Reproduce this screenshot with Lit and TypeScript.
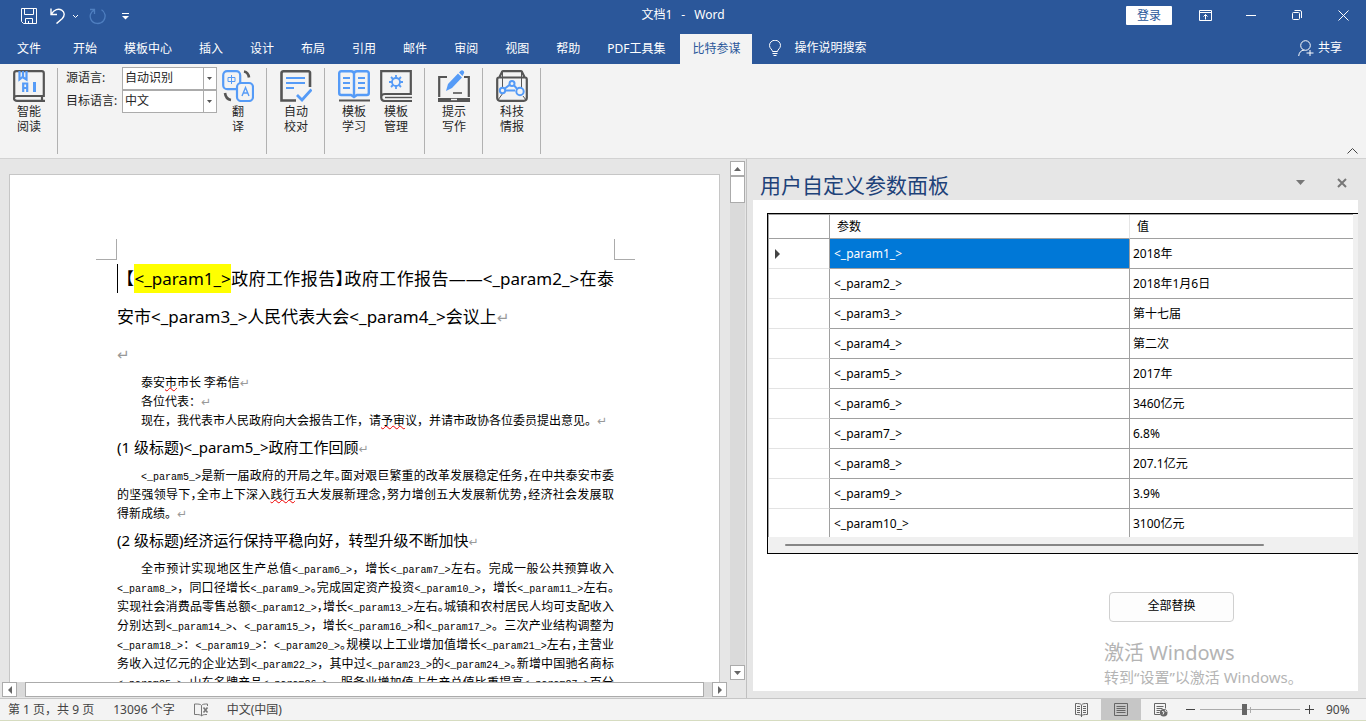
import { LitElement, html, svg, css } from "lit";
import { customElement, state } from "lit/decorators.js";
import { classMap } from "lit/directives/class-map.js";

const tabs = ["文件", "开始", "模板中心", "插入", "设计", "布局", "引用", "邮件", "审阅", "视图", "帮助", "PDF工具集", "比特参谋"];

const values = ["2018年", "2018年1月6日", "第十七届", "第二次", "2017年", "3460亿元", "6.8%", "207.1亿元", "3.9%", "3100亿元"];

/* "|" after a punctuation mark sets it half width; [..] is a spelling mark. */
const overview = [
  "<_param5_>是新一届政府的开局之年。|面对艰巨繁重的改革发展稳定任务,|在中共泰安市委",
  "的坚强领导下,|全市上下深入[践行]五大发展新理念,|努力增创五大发展新优势,|经济社会发展取",
];
const economy = [
  "全市预计实现地区生产总值<_param6_>,增长<_param7_>左右。完成一般公共预算收入",
  "<_param8_>,同口径增长<_param9_>。|完成固定资产投资<_param10_>,增长<_param11_>左右。|",
  "实现社会消费品零售总额<_param12_>,|增长<_param13_>左右。|城镇和农村居民人均可支配收入",
  "分别达到<_param14_>、<_param15_>,增长<_param16_>和<_param17_>。三次产业结构调整为",
  "<_param18_>:<_param19_>:<_param20_>。|规模以上工业增加值增长<_param21_>左右,|主营业",
  "务收入过亿元的企业达到<_param22_>,其中过<_param23_>的<_param24_>。|新增中国驰名商标",
  "<_param25_>、|山东名牌产品<_param26_>。服务业增加值占生产总值比重提高<_param27_>百分",
];

const fullWidth = (s: string) => s.replace(/,/g, "\uFF0C").replace(/:/g, "\uFF1A");

function rich(text: string) {
  return text
    .split(/(<_param\d+_>|.\||\[[^\]]+\])/)
    .filter((p) => p !== "")
    .map((p) => {
      if (p.startsWith("<_")) return html`<span class="token">${p}</span>`;
      if (p.endsWith("|")) return html`<span class="half">${fullWidth(p[0])}</span>`;
      if (p.startsWith("[")) return html`<span class="spell">${p.slice(1, -1)}</span>`;
      return fullWidth(p);
    });
}

const icon = (w: number, h: number, body: unknown) =>
  html`<svg width=${w} height=${h} viewBox="0 0 ${w} ${h}" fill="none" stroke="currentColor" aria-hidden="true">${body}</svg>`;

const G = "#555555";
const B = "#559bf7";

const icons = {
  save: icon(16, 16, svg`<path d="M.5 .5h15v15h-13l-2-2zM3.5 .5v6h9v-6M4.5 15.5v-5h7v5M7.500 13v2"/>`),
  undo: icon(16, 16, svg`<path stroke-width="1.400" d="M1 .5v6h6M1.500 6C4 1.500 8.500 .2 11.700 2.200c3.200 2 3.200 5.600 .6 8.200L6.500 15.600"/>`),
  caret: icon(7, 5, svg`<path d="M1 1l2.500 2.500L6 1"/>`),
  redo: icon(17, 17, svg`<path stroke-width="1.300" d="M1 1.500h4.500v4.500M5.200 2C1.500 4 .2 8 2 11.600c2.500 4.800 9.400 5.200 12.600 1C17.200 9 16.400 4 12.500 1.800"/>`),
  more: icon(7, 7, svg`<path d="M0 .5h7"/><path fill="currentColor" stroke="none" d="M0 3h7L3.500 6.500z"/>`),
  display: icon(13, 11, svg`<path d="M.5 .5h12v10H.5zM.5 2.500h12M6.500 9.500V4.500M4.500 6.500l2-2 2 2"/>`),
  min: icon(10, 10, svg`<path d="M0 5.500h10"/>`),
  restore: icon(10, 10, svg`<rect x=".5" y="2.500" width="7" height="7" rx="1"/><path d="M2.500 .5H8a1.500 1.500 0 0 1 1.500 1.500v6"/>`),
  close: icon(11, 11, svg`<path d="M.5 .5l10 10M10.500 .5l-10 10"/>`),
  bulb: icon(12, 17, svg`<path d="M3.500 11.500c0-2-3-3-3-6a5.200 5 0 0 1 11 0c0 3-3 4-3 6zM3.500 13.500h5M4.500 15.500h3"/>`),
  share: icon(16, 17, svg`<circle cx="7.500" cy="5.500" r="4.800"/><path d="M.7 16c.3-3.500 2.300-5.700 5.500-6M12 10v6M8.500 13h7"/>`),
  read: icon(32, 32, svg`<path stroke=${G} stroke-width="2.200" d="M1.200 28V3a2 2 0 0 1 2-1.800h25.600a2 2 0 0 1 2 1.800v23H4a3 2.400 0 0 0 0 4.800h28M29 26v5"/><path stroke=${B} stroke-width="2.200" d="M6.500 1v8.500l3-2.500L13.500 9.500V1M10 1v6M10.200 22v-8.500h4V22M10 18h4"/><path stroke=${B} stroke-width="3" d="M21.500 12v10"/>`),
  translate: icon(32, 32, svg`<g stroke=${B} stroke-width="2.200"><rect x="1.200" y="1.200" width="17" height="18" rx="4"/><rect x="15" y="13" width="16" height="18" rx="4" fill="#f3f3f3"/></g><path stroke=${B} d="M6 7.500h7v4H6zM9.500 5v9"/><path stroke=${B} stroke-width="1.400" d="M20 26l3.500-8.500L27 26M21.500 23h4"/><path stroke=${G} stroke-width="2.600" d="M22 1.500c3 .5 4.500 2.500 5 6M3 23c.5 4 2.500 6.500 6 7"/>`),
  proof: icon(32, 32, svg`<path stroke=${G} stroke-width="2.600" d="M30 17V3a1.500 1.500 0 0 0-1.500-1.700H3.500A2 2 0 0 0 1.500 3v27.500H16"/><path stroke=${B} stroke-width="2.200" d="M6 8h19M6 13h19M6 18h8"/><path stroke=${B} stroke-width="2.800" d="M17 25l5 5 9.500-10.500"/>`),
  learn: icon(32, 32, svg`<path stroke=${B} stroke-width="2.400" d="M16 4c0-2-1-2.800-3-2.800H3.200a2 2 0 0 0-2 2V23a2 2 0 0 0 2 2H13l3 2 3-2h9.800a2 2 0 0 0 2-2V3.200a2 2 0 0 0-2-2H19c-2 0-3 .8-3 2.800zV27"/><path stroke=${B} stroke-width="2" d="M5 8h7M5 13h7M5 18h7M20 8h7M20 13h7M20 18h7"/><path stroke=${G} stroke-width="2" d="M1 30.500h31"/>`),
  manage: icon(32, 32, svg`<path stroke=${G} stroke-width="2.200" d="M1.200 28V1.200h29.600V24H5c-5 0-5 7 0 7h27"/><path stroke=${G} stroke-width="1.400" d="M5 27.500h27"/><g stroke=${B}><circle cx="16" cy="12" r="4" stroke-width="1.800"/><path stroke-width="1.800" d="M16 5v3M16 16v3M9 12h3M20 12h3M11 7l2 2M19 15l2 2M21 7l-2 2M13 15l-2 2"/></g>`),
  write: icon(32, 32, svg`<path stroke=${G} stroke-width="2.200" d="M9 7H1.200v20M26 7h4.800v20"/><path fill=${G} stroke="none" d="M0 28h32v4H0z"/><path stroke="#f3f3f3" stroke-width="1.400" d="M13 29.500h6"/><path stroke=${G} stroke-width="1.600" d="M15 23h9"/><path fill=${B} stroke="none" d="M8 21l2-7L20 3.500l4 4L14 18zM21 2.500l1.500-1.500c2-2 5 .8 3 3L24.500 6z"/>`),
  intel: icon(32, 32, svg`<path stroke=${G} stroke-width="2.200" d="M3 8l3-6a1 1 0 0 1 1-.8h18a1 1 0 0 1 1 .8L29 8M1.200 9.500C1.200 8 2 7.500 3 7.500h26c1 0 1.800 .5 1.800 2V28a3 3 0 0 1-3 2.800H4a3 3 0 0 1-2.800-2.800z"/><path stroke=${G} d="M6.500 2v21M25.500 2v16M2 30l5-7M30 30l-3-4"/><g stroke=${B} stroke-width="2" fill="#f3f3f3"><path fill="none" d="M7 20l9-7 7 8M10 20.500h9"/><circle cx="16" cy="13.500" r="2.500"/><circle cx="6.500" cy="20.500" r="2.700"/><circle cx="24" cy="21.500" r="3.700"/></g>`),
  up: icon(11, 6, svg`<path d="M.5 5.500l5-5 5 5"/>`),
  triUp: icon(7, 4, svg`<path fill="currentColor" stroke="none" d="M0 4h7L3.500 0z"/>`),
  triDown: icon(7, 4, svg`<path fill="currentColor" stroke="none" d="M0 0h7L3.500 4z"/>`),
  triLeft: icon(4, 8, svg`<path fill="currentColor" stroke="none" d="M4 0v8L0 4z"/>`),
  triRight: icon(4, 8, svg`<path fill="currentColor" stroke="none" d="M0 0v8l4-4z"/>`),
  drop: icon(5, 3, svg`<path fill="currentColor" stroke="none" d="M0 0h5L2.500 3z"/>`),
  paneMenu: icon(9, 5, svg`<path fill="currentColor" stroke="none" d="M0 0h9L4.500 5z"/>`),
  paneClose: icon(10, 10, svg`<path stroke-width="2" d="M1 1l8 8M9 1L1 9"/>`),
  rowMark: icon(5, 10, svg`<path fill="currentColor" stroke="none" d="M0 0v10l5-5z"/>`),
  spelling: icon(15, 14, svg`<path d="M7.500 2.500c-1-1.500-3-1.500-7-1.500v10.500c4 0 6 0 7 1.500zM7.500 2.500c1-1.500 3-1.500 6-1.500v2M7.500 13c.5-1 2-1.500 5.500-1.500"/><path stroke-width="1.600" d="M9.500 4.500l4 5M13.500 4.500l-4 5"/>`),
  viewRead: icon(13, 14, svg`<path d="M6.500 2c-1-1.500-3-1.500-6-1.500v11c3 0 5 0 6 1.500 1-1.500 3-1.500 6-1.500V.5c-3 0-5 0-6 1.500zV14M2 3.500h3M2 5.500h3M2 7.500h3M2 9.500h3M8 3.500h3M8 5.500h3M8 7.500h3M8 9.500h3"/>`),
  viewPrint: icon(14, 13, svg`<path d="M.5 .5h13v12H.5zM2.500 3.500h9M2.500 5.500h9M2.500 7.500h9M2.500 9.500h9"/>`),
  viewWeb: icon(14, 14, svg`<path d="M6 11.500H.5V.5h11v5M2.500 3.500h7M2.500 5.500h6M2.500 7.500h4M2.500 9.500h3"/><circle cx="9.700" cy="9.700" r="3.800" fill="currentColor" stroke="none"/><path stroke="#f3f3f3" d="M8 8.500l2 .5-1 2.500M11 7l1.500 2"/>`),
  minus: icon(9, 9, svg`<path d="M0 4.500h9"/>`),
  plus: icon(9, 9, svg`<path d="M0 4.500h9M4.500 0v9"/>`),
};

@customElement("app-root")
export class AppRoot extends LitElement {
  @state() private activeTab = "比特参谋";
  @state() private selected = 0;

  static styles = css`
    :host {
      display: flex;
      flex-direction: column;
      height: 100vh;
      overflow: hidden;
      font: 12px/16px "Noto Sans", "Noto Sans CJK SC", sans-serif;
      color: #262626;
      background: #e6e6e6;
    }
    * { box-sizing: border-box; }
    svg { display: block; flex: none; }
    p, h1, h2, h3 { margin: 0; font-weight: 400; }
    button, select {
      font: inherit;
      color: inherit;
      background: none;
      border: 0;
      padding: 0;
      margin: 0;
      border-radius: 0;
    }
    button { display: flex; align-items: center; justify-content: center; white-space: nowrap; }

    .titlebar {
      display: grid;
      grid-template-columns: 1fr auto 1fr;
      flex: none;
      height: 32px;
      background: #2b579a;
      color: #fff;
    }
    .quick { display: flex; align-items: center; padding-left: 21px; }
    .quick .undo { margin-left: 13px; }
    .quick .history { margin-left: 6px; }
    .quick .redo { margin-left: 10px; color: #4f7fc0; }
    .quick .more { margin-left: 16px; }
    .doc-name { display: flex; gap: 9px; line-height: 30px; }
    .window { display: flex; justify-content: flex-end; }
    .window button { width: 46px; height: 30px; }
    .window .login {
      height: 19px;
      margin: 6px 10px 0 0;
      background: #fff;
      color: #2b579a;
      border-radius: 1px;
    }

    .tabs { display: flex; flex: none; height: 32px; padding: 0 24px 0 5px; background: #2b579a; color: #fff; }
    .tab { padding: 0 12px; margin-right: 3px; height: 30px; margin-top: 2px; }
    .tab:first-child { margin-right: 8px; }
    .tab.active { background: #f3f3f3; color: #2b579a; margin-right: 17px; }
    .tell { gap: 13px; height: 32px; }
    .share { gap: 4px; height: 32px; margin-left: auto; }

    .ribbon { display: flex; flex: none; height: 95px; padding-top: 4px; background: #f3f3f3; border-bottom: 1px solid #d2d2d2; }
    .group { display: flex; gap: 10px; height: 86px; padding: 2px 12px 0 13px; border-right: 1px solid #b1b1b1; }
    .group.languages { gap: 5px; padding: 0 12px 0 8px; }
    .command { flex-direction: column; justify-content: flex-start; width: 32px; height: 64px; gap: 2px; line-height: 15px; white-space: normal; }
    .command span { width: 24px; }
    .command .single { width: 12px; }
    .languages .command { margin-top: 2px; }
    .fields { display: grid; grid-template-columns: 51px 95px; column-gap: 5px; grid-auto-rows: 23px; margin-top: -1px; white-space: nowrap; }
    .fields label { line-height: 22px; }
    .combo { position: relative; }
    .combo select {
      appearance: none;
      width: 100%;
      height: 23px;
      padding: 0 16px 2px 2px;
      background: #fff;
      border: 1px solid #ababab;
      line-height: 20px;
    }
    .combo svg { position: absolute; right: 5px; top: 10px; color: #555; pointer-events: none; }
    .combo::after { content: ""; position: absolute; right: 13px; top: 1px; bottom: 1px; border-left: 1px solid #ababab; pointer-events: none; }
    .collapse { margin: auto 8px 4px auto; color: #444; }

    .body { display: flex; flex: 1; min-height: 0; }
    .document { display: grid; flex: 1; min-width: 0; grid-template: minmax(0, 1fr) 16px / minmax(0, 1fr) 16px; border-right: 1px solid #c0c0c0; }
    .viewport { overflow: hidden; padding: 15px 10px 0 9px; }
    .page { height: 1000px; padding: 64px 105px 0 107px; background: #fff; border: 1px solid #c6c6c6; color: #000; }
    .marks { display: flex; justify-content: space-between; height: 21px; margin: 0 -21px; }
    .marks span { width: 21px; border: 0 solid #ababab; border-bottom-width: 1px; }
    .marks .left { border-right-width: 1px; }
    .marks .right { border-left-width: 1px; }
    .line { white-space: nowrap; text-align: justify; text-align-last: justify; }
    .headline { position: relative; font-size: 17px; line-height: 38px; }
    .headline mark { padding: 3px 0; background: #ff0; color: #000; }
    .cursor { position: absolute; left: 0; top: 4px; width: 1px; height: 29px; background: #000; }
    .blank { line-height: 36px; font-size: 17px; }
    .heading { font-size: 15px; line-height: 36px; white-space: nowrap; }
    .text { font-family: "Noto Sans CJK SC", sans-serif; line-height: 19px; white-space: nowrap; }
    .indent { padding-left: 24px; }
    .token { font: 10px/12px "Liberation Mono", monospace; }
    .half { font-feature-settings: "halt"; }
    .spell { text-decoration: underline wavy #e00 1px; text-underline-offset: 0; }
    .ret { font-family: "DejaVu Sans", sans-serif; color: #999; font-size: 12px; line-height: 0; }
    .headline .ret, .blank .ret { font-size: 15px; }

    .vscroll { display: flex; flex-direction: column; padding: 2px 1px 2px 0; }
    .scroll-btn { flex: none; width: 15px; height: 15px; background: #fff; border: 1px solid #ababab; color: #666; }
    .track { flex: 1; background: #dadada; }
    .vscroll .thumb { height: 27px; background: #fff; border: 1px solid #ababab; }
    .hscroll { display: flex; padding: 0 3px 1px 2px; }
    .hscroll .track { padding: 0 8px; }
    .hscroll .thumb { height: 15px; background: #fff; border: 1px solid #ababab; }

    .pane { display: flex; flex-direction: column; flex: none; width: 619px; padding: 0 8px 7px 6px; }
    .pane-head { display: flex; align-items: center; height: 41px; padding: 6px 11px 0 7px; color: #777; }
    .pane-head h2 { flex: 1; font-size: 21px; line-height: 30px; color: #1e4279; padding-top: 4px; }
    .pane-head .menu { margin-right: 32px; }
    .pane-body { flex: 1; min-height: 0; padding: 13px 0 0 14px; background: #fff; color: #000; position: relative; }
    .grid { display: flex; flex-direction: column; height: 341px; border: 1px solid #000; border-right: 0; background: #f0f0f0; }
    .rows { height: 323px; overflow: hidden; margin-right: 5px; background: #fff; border: 1px solid #a0a0a0; border-width: 1px 0 0 1px; }
    table { width: 100%; table-layout: fixed; border-collapse: separate; border-spacing: 0; }
    .c-mark { width: 61px; }
    .c-name { width: 300px; }
    th, td { padding: 0; text-align: left; font-weight: 400; white-space: nowrap; border: 0 solid #a0a0a0; border-bottom-width: 1px; }
    thead th { height: 24px; padding-left: 7px; }
    tbody td, tbody th { height: 30px; padding-left: 4px; border-right-width: 1px; }
    tbody th { border-bottom-color: #e3e3e3; padding-left: 6px; color: #444; }
    td:last-child { border-right: 0; padding-left: 3px; }
    thead th:first-child { border-right-width: 1px; }
    thead th:nth-child(2) { border-right: 1px solid #e5e5e5; }
    .picked { background: #0078d7; color: #fff; }
    .grid-scroll { flex: 1; padding: 7px 94px 0 17px; }
    .grid-scroll div { height: 2px; background: #868686; border-radius: 1px; }
    .replace { width: 125px; height: 30px; margin: 38px 124px 0 auto; padding-bottom: 2px; background: #fdfdfd; border: 1px solid #d0d0d0; border-radius: 4px; }
    .activate { position: absolute; right: 58px; bottom: 4px; width: 196px; color: #b4b4b4; white-space: nowrap; font-size: 15px; line-height: 20px; pointer-events: none; }
    .activate p:first-child { font-size: 20px; line-height: 28px; }

    .status { display: flex; align-items: center; flex: none; height: 23px; padding: 0 15px 0 8px; background: #f3f3f3; border-top: 1px solid #c6c6c6; border-bottom: 1px solid #d6dcc0; color: #444; }
    .status .words { margin-left: 19px; }
    .status .spelling { margin: 0 18px 0 19px; color: #777; }
    .views { display: flex; margin-left: auto; align-self: stretch; color: #666; }
    .views button { width: 40px; }
    .views .current { background: #c6c6c6; }
    .zoom { display: flex; align-items: center; gap: 5px; margin-left: 5px; }
    .slider { position: relative; display: flex; }
    .slider::before { content: ""; position: absolute; left: 50%; top: 4px; height: 6px; border-left: 1px solid #ababab; }
    input[type="range"] { appearance: none; position: relative; width: 100px; height: 13px; margin: 0; background: linear-gradient(#ababab, #ababab) center / 100% 1px no-repeat; }
    input[type="range"]::-webkit-slider-thumb { appearance: none; width: 5px; height: 11px; background: #666; }
    .percent { width: 25px; margin-left: 12px; }
  `;

  private command(label: string, glyph: unknown, single = false) {
    return html`<button class="command">${glyph}<span class=${classMap({ single })}>${label}</span></button>`;
  }

  private combo(id: string, label: string, value: string) {
    return html`<label for=${id}>${label}</label>
      <div class="combo"><select id=${id}><option>${value}</option></select>${icons.drop}</div>`;
  }

  render() {
    const ret = html`<span class="ret">↵</span>`;
    return html`
      <header class="titlebar">
        <div class="quick">
          <button aria-label="保存">${icons.save}</button>
          <button class="undo" aria-label="撤消">${icons.undo}</button>
          <button class="history" aria-label="撤消列表">${icons.caret}</button>
          <button class="redo" aria-label="重复">${icons.redo}</button>
          <button class="more" aria-label="自定义快速访问工具栏">${icons.more}</button>
        </div>
        <div class="doc-name"><span>文档1</span><span>-</span><span>Word</span></div>
        <div class="window">
          <button class="login">登录</button>
          <button aria-label="功能区显示选项">${icons.display}</button>
          <button aria-label="最小化">${icons.min}</button>
          <button aria-label="向下还原">${icons.restore}</button>
          <button aria-label="关闭">${icons.close}</button>
        </div>
      </header>

      <nav class="tabs">
        ${tabs.map((t) => html`<button class=${classMap({ tab: true, active: t === this.activeTab })} @click=${() => (this.activeTab = t)}>${t}</button>`)}
        <button class="tell">${icons.bulb}操作说明搜索</button>
        <button class="share">${icons.share}共享</button>
      </nav>

      <section class="ribbon">
        <div class="group">${this.command("智能阅读", icons.read)}</div>
        <div class="group languages">
          <div class="fields">
            ${this.combo("source", "源语言:", "自动识别")}
            ${this.combo("target", "目标语言:", "中文")}
          </div>
          ${this.command("翻译", icons.translate, true)}
        </div>
        <div class="group">${this.command("自动校对", icons.proof)}</div>
        <div class="group">${this.command("模板学习", icons.learn)}${this.command("模板管理", icons.manage)}</div>
        <div class="group">${this.command("提示写作", icons.write)}</div>
        <div class="group">${this.command("科技情报", icons.intel)}</div>
        <button class="collapse" aria-label="折叠功能区">${icons.up}</button>
      </section>

      <main class="body">
        <section class="document">
          <div class="viewport">
            <article class="page">
              <div class="marks"><span class="left"></span><span class="right"></span></div>
              <h1 class="headline">
                <span class="cursor"></span>
                <div class="line">【<mark>&lt;_param1_&gt;</mark>政府工作报告<span class="half">】</span>政府工作报告——&lt;_param2_&gt;在泰</div>
                <div>安市&lt;_param3_&gt;人民代表大会&lt;_param4_&gt;会议上${ret}</div>
              </h1>
              <p class="blank">${ret}</p>
              <div class="text indent">
                <p>${rich("泰安[市]市长 李希信")}${ret}</p>
                <p>${rich("各位代表:")}${ret}</p>
                <p>${rich("现在,我代表市人民政府向大会报告工作,请[予审]议,并请市政协各位委员提出意见。")}${ret}</p>
              </div>
              <h2 class="heading">(1 级标题)&lt;_param5_&gt;政府工作回顾${ret}</h2>
              <div class="text">
                ${overview.map((l, i) => html`<p class=${classMap({ line: true, indent: i === 0 })}>${rich(l)}</p>`)}
                <p>得新成绩。${ret}</p>
              </div>
              <h2 class="heading">(2 级标题)${fullWidth("经济运行保持平稳向好,转型升级不断加快")}${ret}</h2>
              <div class="text">
                ${economy.map((l, i) => html`<p class=${classMap({ line: true, indent: i === 0 })}>${rich(l)}</p>`)}
              </div>
            </article>
          </div>
          <div class="vscroll">
            <button class="scroll-btn" aria-label="向上">${icons.triUp}</button>
            <div class="track"><div class="thumb"></div></div>
            <button class="scroll-btn" aria-label="向下">${icons.triDown}</button>
          </div>
          <div class="hscroll">
            <button class="scroll-btn" aria-label="向左">${icons.triLeft}</button>
            <div class="track"><div class="thumb"></div></div>
            <button class="scroll-btn" aria-label="向右">${icons.triRight}</button>
          </div>
        </section>

        <aside class="pane">
          <div class="pane-head">
            <h2>用户自定义参数面板</h2>
            <button class="menu" aria-label="任务窗格选项">${icons.paneMenu}</button>
            <button aria-label="关闭窗格">${icons.paneClose}</button>
          </div>
          <div class="pane-body">
            <div class="grid">
              <div class="rows">
                <table>
                  <colgroup><col class="c-mark" /><col class="c-name" /><col /></colgroup>
                  <thead><tr><th></th><th scope="col">参数</th><th scope="col">值</th></tr></thead>
                  <tbody>
                    ${values.map((v, i) => html`<tr @click=${() => (this.selected = i)}>
                      <th>${i === this.selected ? icons.rowMark : ""}</th>
                      <td class=${classMap({ picked: i === this.selected })}>&lt;_param${i + 1}_&gt;</td>
                      <td>${v}</td>
                    </tr>`)}
                  </tbody>
                </table>
              </div>
              <div class="grid-scroll"><div></div></div>
            </div>
            <button class="replace">全部替换</button>
            <div class="activate"><p>激活 Windows</p><p>转到“设置”以激活 Windows。</p></div>
          </div>
        </aside>
      </main>

      <footer class="status">
        <span>${fullWidth("第 1 页,共 9 页")}</span>
        <span class="words">13096 个字</span>
        <span class="spelling">${icons.spelling}</span>
        <span>中文(中国)</span>
        <div class="views">
          <button aria-label="阅读视图">${icons.viewRead}</button>
          <button class="current" aria-label="页面视图">${icons.viewPrint}</button>
          <button aria-label="Web 版式视图">${icons.viewWeb}</button>
        </div>
        <div class="zoom">
          <button aria-label="缩小">${icons.minus}</button>
          <span class="slider"><input type="range" min="10" max="190" value="90" aria-label="缩放" /></span>
          <button aria-label="放大">${icons.plus}</button>
        </div>
        <span class="percent">90%</span>
      </footer>
    `;
  }
}
